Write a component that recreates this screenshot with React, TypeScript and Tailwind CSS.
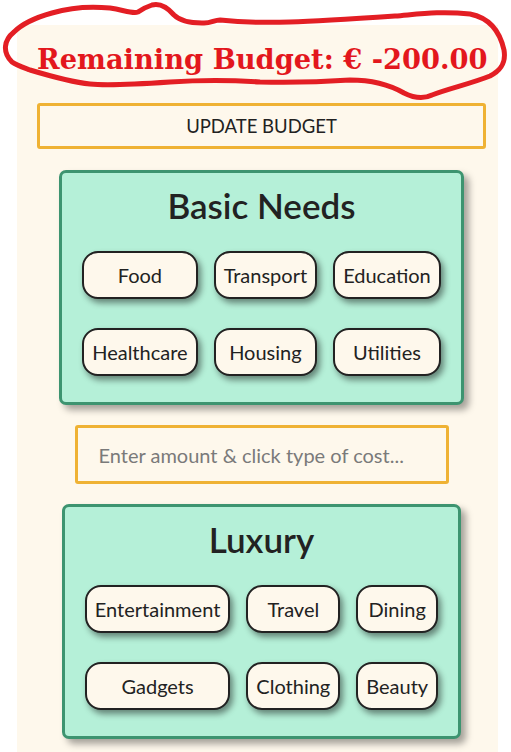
import React from "react";

const basic = ["Food", "Transport", "Education", "Healthcare", "Housing", "Utilities"];
const luxury = ["Entertainment", "Travel", "Dining", "Gadgets", "Clothing", "Beauty"];

function Card({ title, items }: { title: string; items: string[] }) {
  return (
    <div className="w-fit rounded-[7px] border-[3px] border-[#3d9470] bg-[#b5f0d8] px-[20px] pt-[11px] pb-[26px] shadow-[5px_5px_7px_rgba(0,0,0,0.35)]">
      <h2 className="text-center text-[35px] leading-[42px] font-semibold text-[#222]">{title}</h2>
      <div className="mt-[25px] grid grid-cols-[auto_auto_auto] gap-x-[16px] gap-y-[29px]">
        {items.map((it) => (
          <button
            key={it}
            className="h-[48px] rounded-[16px] border-2 border-[#222] bg-[#fef8ec] px-[8px] text-[20px] text-[#222] shadow-[3px_4px_6px_rgba(0,0,0,0.45)]"
          >
            {it}
          </button>
        ))}
      </div>
    </div>
  );
}

export default function App() {
  return (
    <div className="relative min-h-[752px] bg-white pt-[25px] font-['Lato',sans-serif]">
      <div className="ml-[17px] min-h-[727px] w-[481px] bg-[#fef8ec] pl-[20px] pr-[12px]">
        <h1 className="pt-[15px] text-center font-['DejaVu_Serif',serif] text-[27.3px] leading-[38px] font-bold text-[#e3171d] whitespace-nowrap">
          Remaining Budget: € -200.00
        </h1>
        <button className="mt-[25px] block h-[46px] w-full rounded-[3px] border-[3px] border-[#efb234] pt-[2px] text-[18.5px] text-[#222]">
          UPDATE BUDGET
        </button>
        <div className="mt-[21px] flex flex-col items-center">
          <Card title="Basic Needs" items={basic} />
          <input
            placeholder="Enter amount & click type of cost..."
            className="mt-[20px] h-[59px] w-[374px] rounded-[3px] border-[3px] border-[#efb234] bg-transparent pl-[21px] text-[20px] text-[#222] placeholder:text-[#7a7a7a] outline-none"
          />
          <div className="mt-[20px]">
            <Card title="Luxury" items={luxury} />
          </div>
        </div>
      </div>
      <svg
        className="pointer-events-none absolute left-0 top-0"
        width="511"
        height="110"
        viewBox="0 0 511 110"
      >
        <path
          d="M12 62 C2 52 4 40 14 32 C22 24 34 18 52 13 C72 7 90 6 110 8 C124 10 132 14 138 12 C142 9 146 7 152 5 C160 3 168 8 174 15 C180 21 190 23 202 23 C210 24 214 20 220 20 C240 22 262 23 290 22 C320 21 350 19 395 16 C420 14 440 11 470 14 C490 18 500 32 504 50 C506 62 502 70 490 76 C470 84 450 88 432 95 C424 99 414 98 404 93 C390 85 370 80 350 80 C320 82 300 83 260 82 C230 80 200 80 170 82 C140 84 110 86 90 84 C70 82 50 76 30 70 C22 67 16 65 12 62 Z"
          fill="none"
          stroke="#e31e24"
          strokeWidth="5"
          strokeLinejoin="round"
        />
      </svg>
    </div>
  );
}
